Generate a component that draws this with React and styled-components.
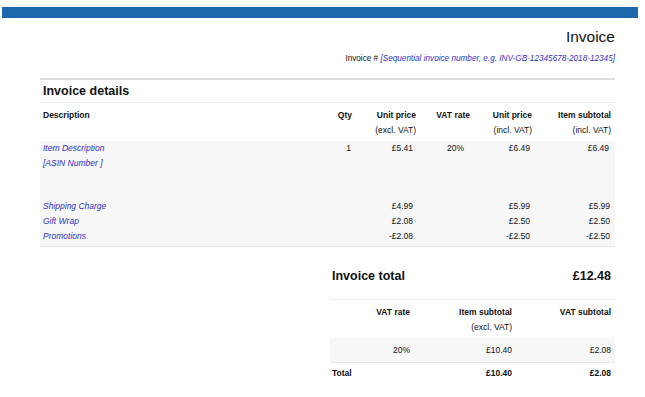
import React from 'react';
import styled, { createGlobalStyle } from 'styled-components';

const GlobalStyle = createGlobalStyle`
  body {
    margin: 0;
    background: #ffffff;
    font-family: 'Liberation Sans', Arial, sans-serif;
    color: #111;
  }
`;

const items = [
  { desc: ['Item Description', '[ASIN Number ]'], qty: '1', excl: '£5.41', vat: '20%', incl: '£6.49', sub: '£6.49' },
];

const extras = [
  { desc: 'Shipping Charge', excl: '£4.99', incl: '£5.99', sub: '£5.99' },
  { desc: 'Gift Wrap', excl: '£2.08', incl: '£2.50', sub: '£2.50' },
  { desc: 'Promotions', excl: '-£2.08', incl: '-£2.50', sub: '-£2.50' },
];

export default function App() {
  return (
    <>
      <GlobalStyle />
      <TopBar />
      <Sheet>
        <Head>
          <Title>Invoice</Title>
          <Number>
            Invoice # <Placeholder>[Sequential invoice number, e.g. INV-GB-12345678-2018-12345]</Placeholder>
          </Number>
        </Head>

        <SectionTitle>Invoice details</SectionTitle>
        <DetailsGrid>
          <HeadCell $align="left">Description</HeadCell>
          <HeadCell>Qty</HeadCell>
          <HeadCell>Unit price<br /><Sub>(excl. VAT)</Sub></HeadCell>
          <HeadCell>VAT rate</HeadCell>
          <HeadCell>Unit price<br /><Sub>(incl. VAT)</Sub></HeadCell>
          <HeadCell>Item subtotal<br /><Sub>(incl. VAT)</Sub></HeadCell>
        </DetailsGrid>

        <ItemBlock>
          {items.map((it) => (
            <DetailsGrid key={it.desc[0]}>
              <DescCell>
                {it.desc.map((d) => (
                  <div key={d}>{d}</div>
                ))}
              </DescCell>
              <ValueCell $pad={5}>{it.qty}</ValueCell>
              <ValueCell $pad={7}>{it.excl}</ValueCell>
              <ValueCell $pad={10}>{it.vat}</ValueCell>
              <ValueCell $pad={6}>{it.incl}</ValueCell>
              <ValueCell $pad={6}>{it.sub}</ValueCell>
            </DetailsGrid>
          ))}
          <Spacer />
          {extras.map((it) => (
            <DetailsGrid key={it.desc}>
              <DescCell>{it.desc}</DescCell>
              <ValueCell />
              <ValueCell $pad={7}>{it.excl}</ValueCell>
              <ValueCell />
              <ValueCell $pad={6}>{it.incl}</ValueCell>
              <ValueCell $pad={5}>{it.sub}</ValueCell>
            </DetailsGrid>
          ))}
        </ItemBlock>

        <Totals>
          <TotalHead>
            <span>Invoice total</span>
            <span>£12.48</span>
          </TotalHead>
          <VatGrid>
            <HeadCell>VAT rate</HeadCell>
            <HeadCell>Item subtotal<br /><Sub>(excl. VAT)</Sub></HeadCell>
            <HeadCell>VAT subtotal</HeadCell>
          </VatGrid>
          <VatGrid $shaded>
            <ValueCell $pad={4}>20%</ValueCell>
            <ValueCell $pad={4}>£10.40</ValueCell>
            <ValueCell $pad={4}>£2.08</ValueCell>
          </VatGrid>
          <SumGrid>
            <SumCell $align="left">Total</SumCell>
            <SumCell />
            <SumCell>£10.40</SumCell>
            <SumCell>£2.08</SumCell>
          </SumGrid>
        </Totals>
      </Sheet>
    </>
  );
}

const TopBar = styled.div`
  height: 11px;
  margin: 7px 7px 0 2px;
  background: #1d67ad;
`;

const Sheet = styled.div`
  width: 575px;
  margin-left: 40px;
`;

const Head = styled.div`
  text-align: right;
  padding-bottom: 14px;
  border-bottom: 2px solid #dcdcdc;
`;

const Title = styled.div`
  font-size: 15.5px;
  line-height: 18px;
  margin-top: 10px;
  color: #111;
`;

const Number = styled.div`
  font-size: 8.2px;
  line-height: 10px;
  margin-top: 8px;
`;

const Placeholder = styled.span`
  font-style: italic;
  color: #3030c4;
`;

const SectionTitle = styled.div`
  font-size: 12.5px;
  font-weight: bold;
  line-height: 15px;
  padding: 4px 3px 3px;
  border-bottom: 1px solid #ececec;
`;

const DetailsGrid = styled.div`
  display: grid;
  grid-template-columns: 276px 40px 64px 54px 62px 79px;
  font-size: 8.5px;
  line-height: 15px;
`;

const HeadCell = styled.div`
  font-weight: bold;
  text-align: ${(p) => p.$align || 'right'};
  padding: 5px 4px 3px 3px;
`;

const Sub = styled.span`
  font-weight: normal;
`;

const ItemBlock = styled.div`
  background: #f7f7f7;
  border-bottom: 1px solid #e6e6e6;
  padding: 0 0 2px;
`;

const DescCell = styled.div`
  font-style: italic;
  color: #3030c4;
  padding-left: 3px;
  line-height: 14.5px;
`;

const ValueCell = styled.div`
  text-align: right;
  padding-right: ${(p) => p.$pad || 4}px;
`;

const Spacer = styled.div`
  height: 29px;
`;

const Totals = styled.div`
  width: 285px;
  margin: 18px 0 0 auto;
`;

const TotalHead = styled.div`
  display: flex;
  justify-content: space-between;
  font-size: 12.5px;
  font-weight: bold;
  line-height: 15px;
  padding: 4px 4px 15px 2px;
  border-bottom: 1px solid #ececec;
`;

const VatGrid = styled.div`
  display: grid;
  grid-template-columns: 84px 102px 99px;
  font-size: 8.5px;
  line-height: 15px;
  background: ${(p) => (p.$shaded ? '#f7f7f7' : 'transparent')};
  border-bottom: ${(p) => (p.$shaded ? '1px solid #e6e6e6' : 'none')};
  padding: ${(p) => (p.$shaded ? '5px 0 4px' : '0')};
`;

const SumGrid = styled.div`
  display: grid;
  grid-template-columns: 40px 44px 102px 99px;
  font-size: 8.5px;
  line-height: 15px;
  padding-top: 3px;
`;

const SumCell = styled.div`
  font-weight: bold;
  text-align: ${(p) => p.$align || 'right'};
  padding: 0 4px 0 2px;
`;
